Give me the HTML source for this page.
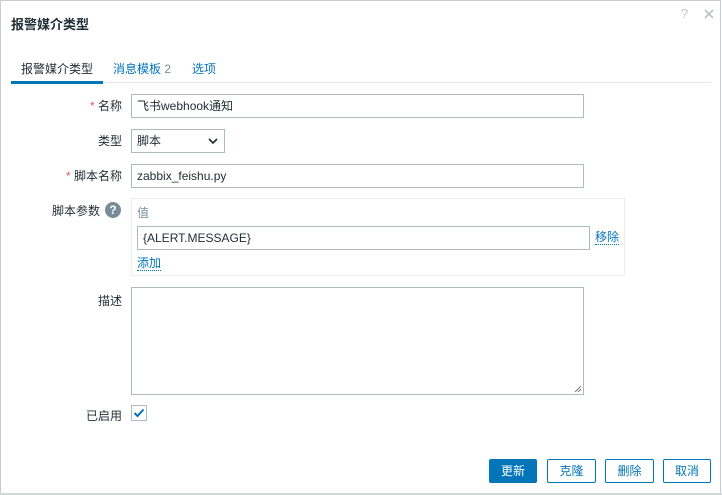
<!DOCTYPE html>
<html><head><meta charset="utf-8"><style>
*{box-sizing:border-box;margin:0;padding:0}
body{width:722px;height:495px;background:#fff;font-family:"Liberation Sans","Noto Sans CJK SC",sans-serif;font-size:12px;color:#1f2c33;position:relative;overflow:hidden}
.dlg{position:absolute;left:0;top:0;width:721px;height:494px;border:1px solid #c6ced4;background:#fff}
.a{position:absolute}
.lbl{position:absolute;right:600px;text-align:right;white-space:nowrap;font-size:12px}
.star{color:#e45959}
.inp{position:absolute;border:1px solid #acbbc2;background:#fff;padding:0 5px;line-height:22px;font-size:12px;white-space:nowrap}
.lnk{color:#0275b8;border-bottom:1px dotted #0275b8;line-height:13px}
.btn{position:absolute;top:459px;height:24px;border:1px solid #0275b8;border-radius:2px;color:#0275b8;background:#fff;text-align:center;line-height:22px;font-size:12px}
</style></head><body>
<div class="dlg"></div>
<div class="a" style="left:11px;top:14px;font-size:13px;font-weight:bold;color:#1f2c33">报警媒介类型</div>
<div class="a" style="left:681px;top:6px;color:#c0c8cd;font-size:13px">?</div>
<svg class="a" style="left:704px;top:9px" width="10" height="10"><path d="M1 1L9 9M9 1L1 9" stroke="#b9c2c8" stroke-width="1.6"/></svg>
<div class="a" style="left:21px;top:60px;font-size:12px">报警媒介类型</div>
<div class="a" style="left:113px;top:60px;color:#0275b8">消息模板 <span style="color:#768d99">2</span></div>
<div class="a" style="left:192px;top:60px;color:#0275b8">选项</div>
<div class="a" style="left:11px;top:82px;width:700px;height:1px;background:#e5e8ea"></div>
<div class="a" style="left:11px;top:81px;width:92px;height:3px;background:#0275b8"></div>

<div class="lbl" style="top:97px"><span class="star">*</span> 名称</div>
<div class="inp" style="left:131px;top:94px;width:453px;height:24px">飞书webhook通知</div>
<div class="lbl" style="top:132px">类型</div>
<div class="inp" style="left:131px;top:129px;width:94px;height:24px">脚本</div>
<svg class="a" style="left:208px;top:137px" width="10" height="8"><path d="M1 2L5 6L9 2" stroke="#1f2c33" stroke-width="1.6" fill="none"/></svg>
<div class="lbl" style="top:167px"><span class="star">*</span> 脚本名称</div>
<div class="inp" style="left:131px;top:164px;width:453px;height:24px">zabbix_feishu.py</div>
<div class="lbl" style="top:202px;right:622px">脚本参数</div>
<div class="a" style="left:105px;top:202px;width:16px;height:16px;border-radius:50%;background:#768d99;color:#fff;font-weight:bold;font-size:12px;text-align:center;line-height:16px">?</div>
<div class="a" style="left:131px;top:198px;width:494px;height:78px;border:1px solid #ebeef0"></div>
<div class="a" style="left:137px;top:204px;color:#768d99">值</div>
<div class="inp" style="left:137px;top:226px;width:453px;height:24px">{ALERT.MESSAGE}</div>
<div class="a lnk" style="left:595px;top:231px">移除</div>
<div class="a lnk" style="left:137px;top:257px">添加</div>
<div class="lbl" style="top:292px">描述</div>
<div class="inp" style="left:131px;top:287px;width:453px;height:108px"></div>
<svg class="a" style="left:574px;top:385px" width="8" height="8"><path d="M7 1L1 7M7 4L4 7" stroke="#555" stroke-width="0.8"/></svg>
<div class="lbl" style="top:407px">已启用</div>
<div class="a" style="left:131px;top:405px;width:16px;height:16px;border:1px solid #acbbc2;background:#fff"></div>
<svg class="a" style="left:133px;top:408px" width="12" height="10"><path d="M1.5 5L4.5 8L10.5 1.5" stroke="#0275b8" stroke-width="2" fill="none"/></svg>

<div class="btn" style="left:489px;width:48px;background:#0275b8;color:#fff">更新</div>
<div class="btn" style="left:547px;width:49px">克隆</div>
<div class="btn" style="left:605px;width:49px">删除</div>
<div class="btn" style="left:663px;width:48px">取消</div>
<div class="a" style="left:0;top:493px;width:722px;height:2px;background:#d3d8db"></div>
</body></html>
